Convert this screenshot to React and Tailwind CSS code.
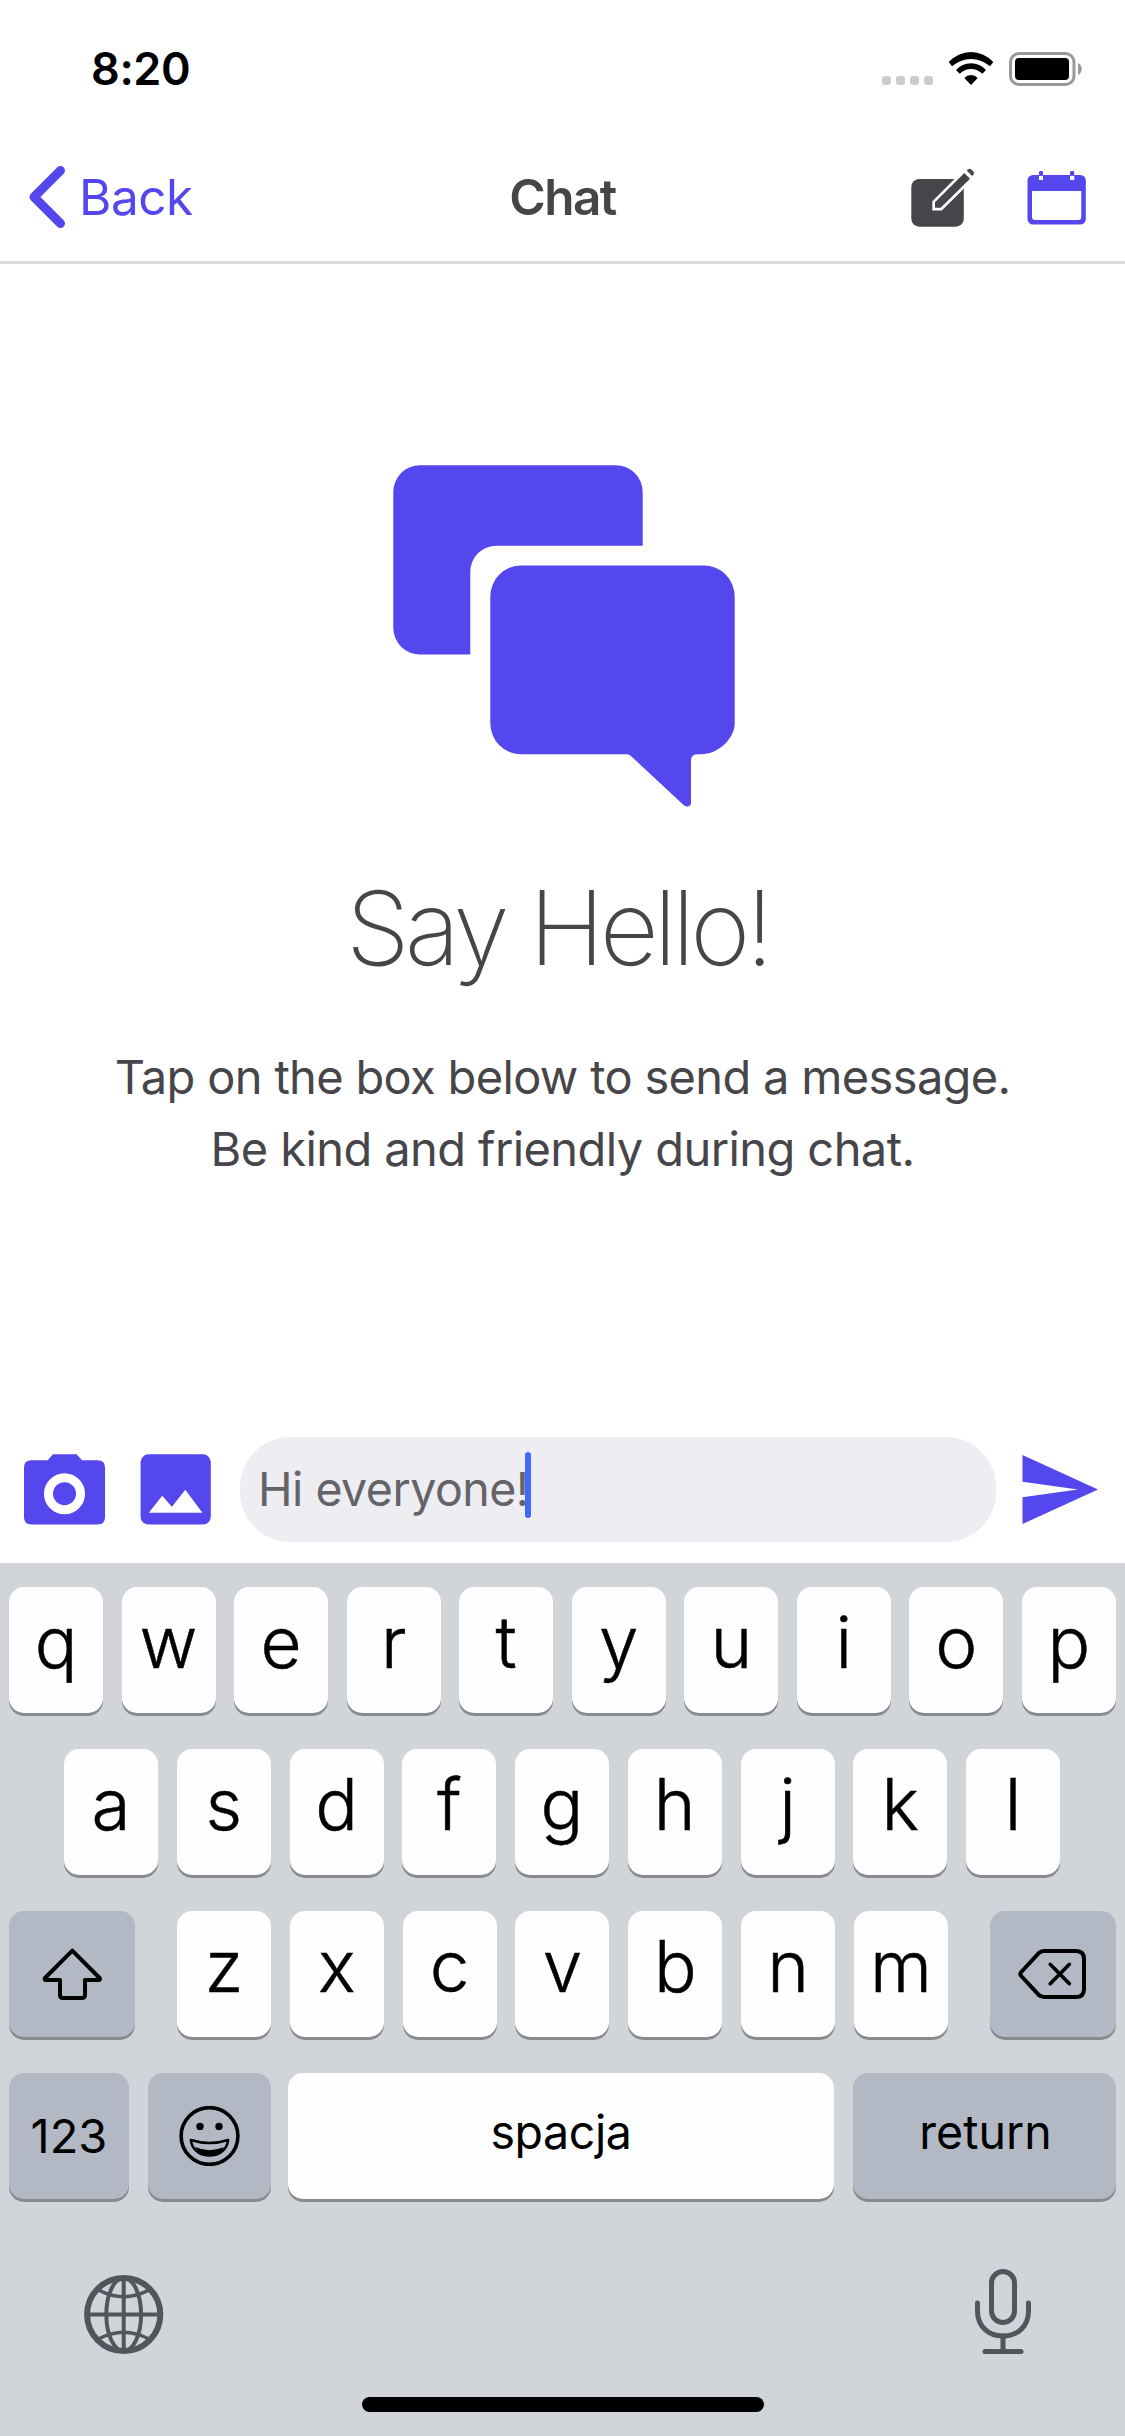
import React from "react";

function SignalDots() {
  return (
    <div className="flex h-[34px] items-end gap-[5px] pb-px">
      {[0, 1, 2, 3].map((i) => (
        <span key={i} className="h-[9px] w-[9px] rounded-[3px] bg-[#cccccc]" />
      ))}
    </div>
  );
}

function WifiIcon() {
  return (
    <svg className="h-[34px] w-[46px]" viewBox="0 0 46 34">
      <path d="M0.7 10A30 30 0 0 1 45.3 10L42 14.3A28.4 28.4 0 0 0 4 14.3Z" />
      <path d="M8 18A20 20 0 0 1 38 18L34.3 21.7A16 16 0 0 0 11.7 21.7Z" />
      <path d="M16.3 26A9 9 0 0 1 29.7 26L23 33Z" />
    </svg>
  );
}

function BatteryIcon() {
  return (
    <svg className="h-[34px] w-[74px]" viewBox="0 0 74 34">
      <rect x="1.5" y="1.5" width="63.5" height="31" rx="8.5" fill="none" stroke="#999" strokeWidth="3" />
      <rect x="6" y="6" width="54" height="22" rx="4" />
      <path d="M69 11C74 13 74 21 69 23Z" fill="#999" />
    </svg>
  );
}

function ComposeIcon() {
  return (
    <svg className="h-[60px] w-16" viewBox="0 -1 64 60" fill="#464549">
      <rect x="0.3" y="11" width="52.5" height="47.7" rx="8" />
      <path d="M24 34.3L53.3 5L59 10.7L29.7 39.7H24Z" stroke="#fff" strokeWidth="5.4" strokeLinejoin="miter" />
      <path d="M24 34.3L53.3 5L59 10.7L29.7 39.7H24Z" />
      <path d="M55.8 2.6L57.3 1.2Q58.9 0 60.4 1.4L62.4 3.4Q63.7 4.9 62.5 6.4L61 8Z" />
    </svg>
  );
}

function CalendarIcon() {
  return (
    <svg className="h-[60px] w-[60px]" viewBox="0 -3 60 60">
      <rect x="0.5" y="5" width="58.3" height="49.6" rx="5.5" fill="#5447ee" />
      <path d="M5 21H54.3V47Q54.3 50 51.3 50H8Q5 50 5 47Z" fill="#fff" />
      <path d="M12 5.5H16V10H12ZM43 5.5H47.3V10H43Z" fill="#fff" />
      <path d="M12 5.7V2.4Q12 1 13.4 1H14.6Q16 1 16 2.4V5.7ZM43 5.7V2.4Q43 1 44.4 1H45.9Q47.3 1 47.3 2.4V5.7Z" fill="#5447ee" />
    </svg>
  );
}

function BubblesIcon() {
  return (
    <svg className="h-[343px] w-[342px]" viewBox="0 0 342 343" fill="#5447ee">
      <path d="M27 0.2H222.7A27 27 0 0 1 249.7 27.2V80.7H103.3A26 26 0 0 0 77.3 106.7V189.5H27A26.7 26.7 0 0 1 0.3 162.8V27A26.8 26.8 0 0 1 27 0.2Z" />
      <path d="M128.3 100.5H310.7A31 31 0 0 1 341.7 131.5V259.3C341.2 273 326 289.3 308 289.3H305Q298 289.3 298 295V338C298 341.5 293.5 342.8 290.3 339.7L238.7 291.7Q236.2 289.3 233.7 289.3H128.3A31 31 0 0 1 97.3 258.3V131.5A31 31 0 0 1 128.3 100.5Z" />
    </svg>
  );
}

function CameraIcon() {
  return (
    <svg className="h-[71px] w-[82px]" viewBox="0 0 82 71">
      <path d="M24.7 6.3L30 0.3H53.5L59 6.3H74.5Q82 6.3 82 13.5V63.2Q82 70.5 74.5 70.5H8.5Q1 70.5 1 63.2V13.5Q1 6.3 8.5 6.3Z" fill="#5447ee" />
      <circle cx="41.5" cy="39.7" r="16" fill="none" stroke="#fff" strokeWidth="9" />
    </svg>
  );
}

function ImageIcon() {
  return (
    <svg className="h-[71px] w-[72px]" viewBox="0 0 72 71">
      <rect x="0.6" y="0.3" width="70.2" height="70.3" rx="8" fill="#5447ee" />
      <path d="M8.8 58.8L22.2 41.8L31.9 52.7L45.3 35.7L62.4 58.8Z" fill="#fff" />
    </svg>
  );
}

function SendIcon() {
  return (
    <svg className="h-[71px] w-[76px]" viewBox="0 0 76 71" fill="#5447ee">
      <path d="M0.5 1L76 35.5L0.5 70V43.3L56 35.5L0.5 27.7Z" />
    </svg>
  );
}

function ShiftIcon() {
  return (
    <svg className="h-[54px] w-[60px]" viewBox="0 0 60 54" fill="none" stroke="#000" strokeWidth="4" strokeLinejoin="round">
      <path d="M30.3 3.6L3 31Q2 33 4 33H18V48Q18 51 21 51H40Q43 51 43 48V33H56.5Q58.6 33 57.6 31Z" />
    </svg>
  );
}

function DeleteIcon() {
  return (
    <svg className="h-[52px] w-[70px]" viewBox="0 0 70 52" fill="none" stroke="#000" strokeLinecap="round" strokeLinejoin="round">
      <path strokeWidth="4" d="M2.8 24.5L20.5 5.3Q23 3 26 3H58Q66 3 66 11V41Q66 49 58 49H26Q23 49 20.5 46.7L2.8 27.5Q1.8 26 2.8 24.5Z" />
      <path strokeWidth="3.6" d="M32.2 16.3L51.4 35.7M51.4 16.3L32.2 35.7" />
    </svg>
  );
}

function EmojiIcon() {
  return (
    <svg className="h-[60px] w-[61px]" viewBox="0 0 61 60">
      <circle cx="30.5" cy="30" r="28.4" fill="none" stroke="#000" strokeWidth="3.6" />
      <circle cx="21" cy="20.4" r="3.7" />
      <circle cx="40" cy="20.4" r="3.7" />
      <path d="M11.8 34Q30.5 40 49.2 34C48 44 40 49.6 30.5 49.6S13 44 11.8 34Z" fill="none" stroke="#000" strokeWidth="2.4" strokeLinejoin="round" />
      <path d="M16.2 41Q30.5 47.5 44.8 41Q40.5 50 30.5 50Q20.5 50 16.2 41Z" />
    </svg>
  );
}

function GlobeIcon() {
  return (
    <svg className="h-[90px] w-20" viewBox="0 0 80 90" fill="none" stroke="#51565b" strokeWidth="4">
      <circle cx="39.7" cy="47.5" r="36.6" strokeWidth="6" />
      <ellipse cx="39.7" cy="47.5" rx="17.4" ry="36.6" />
      <path d="M39.7 10V85M3 47.5H77" />
      <path strokeWidth="3.6" d="M14.5 23Q39.7 36.5 64.9 23M14.5 72Q39.7 58.5 64.9 72" />
    </svg>
  );
}

function MicIcon() {
  return (
    <svg className="h-[90px] w-[58px]" viewBox="0 0 58 90" fill="none" stroke="#51565b" strokeWidth="5" strokeLinecap="round">
      <rect x="17.5" y="4.5" width="23" height="51" rx="11.5" />
      <path d="M3.5 36V44C3.5 59 14 69 29 69S54.5 59 54.5 44V36" />
      <path d="M29 69V84M11 84.5H47" />
    </svg>
  );
}

function Key({ children, className = "" }) {
  return (
    <button className={`flex h-[126px] items-center justify-center rounded-[15px] text-black shadow-[0_3px_0_#898a8d] ${className}`}>
      {children}
    </button>
  );
}

function LetterKeys({ letters, className }) {
  return (
    <div className={`flex justify-between ${className}`}>
      {letters.split("").map((letter) => (
        <Key key={letter} className="w-[94px] bg-[#fefefe] pb-4 text-[71px] font-light [-webkit-text-stroke:0.5px_#000]">
          {letter}
        </Key>
      ))}
    </div>
  );
}

function Keyboard() {
  return (
    <div className="flex h-[873px] flex-col bg-[#d1d4d9] pt-6">
      <div className="flex flex-col gap-9">
        <LetterKeys letters="qwertyuiop" className="px-[9px]" />
        <LetterKeys letters="asdfghjkl" className="pr-[65px] pl-16" />
        <div className="flex justify-between px-[9px]">
          <Key className="w-[126px] bg-[#b2b8c4]"><ShiftIcon /></Key>
          <LetterKeys letters="zxcvbnm" className="w-[771px]" />
          <Key className="w-[126px] bg-[#b2b8c4]"><DeleteIcon /></Key>
        </div>
        <div className="flex px-[9px]">
          <Key className="w-[120px] bg-[#b2b8c4] text-[47px]">123</Key>
          <Key className="ml-[19px] w-[123px] bg-[#b2b8c4]"><EmojiIcon /></Key>
          <Key className="ml-[17px] flex-1 bg-[#fefefe] pb-1.5 text-[46.5px] tracking-[-0.4px]">spacja</Key>
          <Key className="ml-[19px] w-[263px] bg-[#b2b8c4] pb-1.5 pl-0.5 text-[46.5px]">return</Key>
        </div>
      </div>
      <div className="mt-[68px] flex justify-between pr-[93px] pl-[84px]">
        <GlobeIcon />
        <MicIcon />
      </div>
      <div className="mt-10 h-[15px] w-[402px] self-center rounded-full bg-black" />
    </div>
  );
}

export default function App() {
  return (
    <div className="flex h-[2436px] w-[1125px] flex-col overflow-hidden bg-white font-['Inter',sans-serif]">
      <div className="flex h-[137px] items-center justify-between pr-[42px] pl-[91px]">
        <span className="text-[45px] font-semibold tracking-[-0.4px] text-black">8:20</span>
        <div className="flex gap-[15px]">
          <SignalDots />
          <WifiIcon />
          <BatteryIcon />
        </div>
      </div>

      <header className="grid h-[127px] grid-cols-[1fr_auto_1fr] items-center border-b-3 border-[#dadade] pb-1">
        <button className="flex items-center gap-[13px] pl-[29px] text-[#5447ee]">
          <svg className="h-16 w-[37px]" viewBox="0 0 37 64" fill="none" stroke="#5447ee" strokeWidth="9" strokeLinecap="round" strokeLinejoin="round">
            <path d="M31.5 5.5L5 32L31.5 58.5" />
          </svg>
          <span className="pt-0.5 text-[49.5px] leading-none tracking-[-0.5px]">Back</span>
        </button>
        <h1 className="pt-0.5 text-[49.5px] leading-none font-semibold tracking-[-1.5px] text-[#464549]">Chat</h1>
        <div className="flex justify-end gap-[52px] pr-[38px]">
          <ComposeIcon />
          <CalendarIcon />
        </div>
      </header>

      <main className="flex flex-1 flex-col items-center pt-[201px] text-[#464549]">
        <div className="pl-[3px]">
          <BubblesIcon />
        </div>
        <h2 className="mt-[60px] pr-2.5 text-[102.5px] leading-[120px] font-extralight tracking-[-4.8px]">Say Hello!</h2>
        <p className="mt-[53px] text-center text-[47px] leading-[72px]">
          <span className="tracking-[-0.67px]">Tap on the box below to send a message.</span>
          <br />
          <span className="tracking-[-0.58px]">Be kind and friendly during chat.</span>
        </p>
      </main>

      <div className="flex items-center pb-[21px] pl-[23px]">
        <CameraIcon />
        <div className="ml-[35px]">
          <ImageIcon />
        </div>
        <div className="ml-7 flex h-[105px] w-[756px] items-center rounded-[50px] bg-[#eeedf2] pl-[18px]">
          <span className="text-[46.5px] leading-none tracking-[-0.5px] text-[#646367]">Hi everyone!</span>
          <span className="mb-[9px] -ml-1 h-[66px] w-1.5 rounded-full bg-[#4169f5]" />
        </div>
        <div className="ml-[26px]">
          <SendIcon />
        </div>
      </div>

      <Keyboard />
    </div>
  );
}
